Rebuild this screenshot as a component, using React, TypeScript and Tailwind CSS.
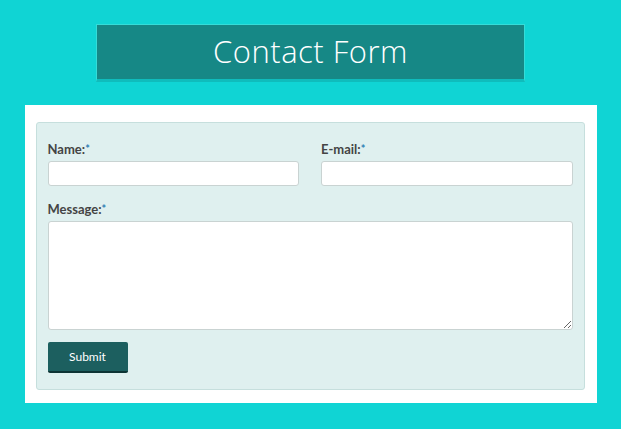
import React from 'react';

const Label: React.FC<{ htmlFor: string; children: React.ReactNode }> = ({ htmlFor, children }) => (
  <label htmlFor={htmlFor} className="block text-[13px] leading-[18px] font-bold text-[#444] mb-[3px]">
    {children}
    <span className="text-[#2f7fb5] text-[11px] align-top">*</span>
  </label>
);

const inputClass =
  'block w-full bg-white border border-[#c9d3d2] rounded-[3px] outline-none';

export default function App() {
  return (
    <div className="w-[621px] h-[429px] bg-[#10d4d4] pt-[24px] font-['Lato',sans-serif]">
      <div className="mx-auto w-[429px] h-[58px] bg-[#168886] border border-[#35dcd8] border-b-[3px] border-b-[#0fbcbc] flex items-center justify-center">
        <h1 className="text-white text-[31px] font-light tracking-[0.5px] font-['Open_Sans',sans-serif] leading-none pb-[2px]">
          Contact Form
        </h1>
      </div>
      <div className="mt-[23px] mx-auto w-[572px] bg-white pt-[17px] pb-[13px] pl-[11px] pr-[12px]">
        <form className="bg-[#dff0ef] border border-[#c6dfdd] rounded-[3px] pt-[17px] pb-[16px] px-[11px]">
          <div className="grid grid-cols-2 gap-x-[22px]">
            <div>
              <Label htmlFor="name">Name:</Label>
              <input id="name" type="text" className={`${inputClass} h-[25px]`} />
            </div>
            <div>
              <Label htmlFor="email">E-mail:</Label>
              <input id="email" type="text" className={`${inputClass} h-[25px]`} />
            </div>
          </div>
          <div className="mt-[14px]">
            <Label htmlFor="message">Message:</Label>
            <textarea id="message" className={`${inputClass} h-[109px] resize-y`} />
          </div>
          <button
            type="button"
            className="mt-[12px] w-[80px] h-[31px] bg-[#1c5f5f] text-white text-[12px] font-normal rounded-[2px] border-b-2 border-b-[#0d3434]"
          >
            Submit
          </button>
        </form>
      </div>
    </div>
  );
}
